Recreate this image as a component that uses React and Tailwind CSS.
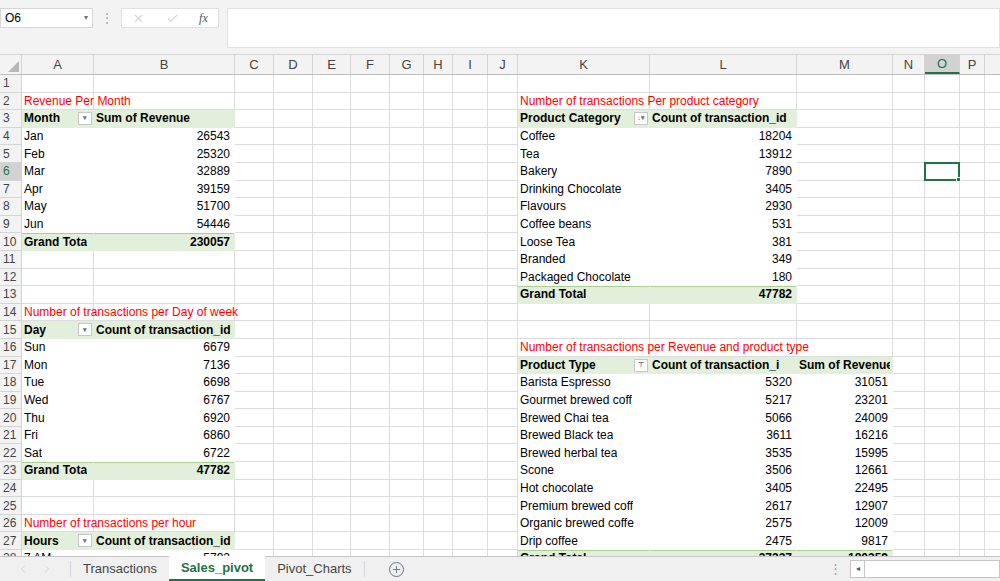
import { Plus, ChevronLeft, ChevronRight, X, Check } from 'lucide-react'

const cols = [
  ['A', 72], ['B', 141], ['C', 39], ['D', 39], ['E', 38], ['F', 39], ['G', 34], ['H', 29], ['I', 35], ['J', 30],
  ['K', 132], ['L', 147], ['M', 96], ['N', 32], ['O', 35], ['P', 25], ['Q', 60],
]

const T = 'title', H = 'head', R = 'num', G = 'total', GR = 'totalnum', D = 'dropdown'

const left = {
  2: { A: ['Revenue Per Month', T] },
  3: { A: ['Month', H, D], B: ['Sum of Revenue', H] },
  4: { A: ['Jan'], B: ['26543', R] },
  5: { A: ['Feb'], B: ['25320', R] },
  6: { A: ['Mar'], B: ['32889', R] },
  7: { A: ['Apr'], B: ['39159', R] },
  8: { A: ['May'], B: ['51700', R] },
  9: { A: ['Jun'], B: ['54446', R] },
  10: { A: ['Grand Tota', G], B: ['230057', GR] },
  14: { A: ['Number of transactions per Day of week', T] },
  15: { A: ['Day', H, D], B: ['Count of transaction_id', H] },
  16: { A: ['Sun'], B: ['6679', R] },
  17: { A: ['Mon'], B: ['7136', R] },
  18: { A: ['Tue'], B: ['6698', R] },
  19: { A: ['Wed'], B: ['6767', R] },
  20: { A: ['Thu'], B: ['6920', R] },
  21: { A: ['Fri'], B: ['6860', R] },
  22: { A: ['Sat'], B: ['6722', R] },
  23: { A: ['Grand Tota', G], B: ['47782', GR] },
  26: { A: ['Number of transactions per hour', T] },
  27: { A: ['Hours', H, D], B: ['Count of transaction_id', H] },
  28: { A: ['7 AM'], B: ['5792', R] },
}
const right = {
  2: { K: ['Number of transactions Per product category', T] },
  3: { K: ['Product Category', H, 'sort'], L: ['Count of transaction_id', H] },
  4: { K: ['Coffee'], L: ['18204', R] },
  5: { K: ['Tea'], L: ['13912', R] },
  6: { K: ['Bakery'], L: ['7890', R] },
  7: { K: ['Drinking Chocolate'], L: ['3405', R] },
  8: { K: ['Flavours'], L: ['2930', R] },
  9: { K: ['Coffee beans'], L: ['531', R] },
  10: { K: ['Loose Tea'], L: ['381', R] },
  11: { K: ['Branded'], L: ['349', R] },
  12: { K: ['Packaged Chocolate'], L: ['180', R] },
  13: { K: ['Grand Total', G], L: ['47782', GR] },
  16: { K: ['Number of transactions per Revenue and product type', T] },
  17: { K: ['Product Type', H, 'filter'], L: ['Count of transaction_i', H], M: ['Sum of Revenue', H] },
  18: { K: ['Barista Espresso'], L: ['5320', R], M: ['31051', R] },
  19: { K: ['Gourmet brewed coff'], L: ['5217', R], M: ['23201', R] },
  20: { K: ['Brewed Chai tea'], L: ['5066', R], M: ['24009', R] },
  21: { K: ['Brewed Black tea'], L: ['3611', R], M: ['16216', R] },
  22: { K: ['Brewed herbal tea'], L: ['3535', R], M: ['15995', R] },
  23: { K: ['Scone'], L: ['3506', R], M: ['12661', R] },
  24: { K: ['Hot chocolate'], L: ['3405', R], M: ['22495', R] },
  25: { K: ['Premium brewed coff'], L: ['2617', R], M: ['12907', R] },
  26: { K: ['Organic brewed coffe'], L: ['2575', R], M: ['12009', R] },
  27: { K: ['Drip coffee'], L: ['2475', R], M: ['9817', R] },
  28: { K: ['Grand Total', G], L: ['37327', GR], M: ['180359', GR] },
}
const cells = {}
for (let r = 1; r <= 29; r++) cells[r] = { ...(left[r] || {}), ...(right[r] || {}) }

const shade = {
  3: ['A', 'B', 'K', 'L'], 10: ['A', 'B'], 13: ['K', 'L'], 15: ['A', 'B'], 23: ['A', 'B'],
  17: ['K', 'L', 'M'], 27: ['A', 'B'], 28: ['K', 'L', 'M'],
}
const topLine = { 10: ['A', 'B'], 13: ['K', 'L'], 23: ['A', 'B'], 28: ['K', 'L', 'M'] }
const white = {}
;[4, 5, 6, 7, 8, 9, 16, 17, 18, 19, 20, 21, 22, 28].forEach((r) => (white[r] = ['A', 'B']))
;[4, 5, 6, 7, 8, 9, 10, 11, 12].forEach((r) => (white[r] = [...(white[r] || []), 'K', 'L']))
;[18, 19, 20, 21, 22, 23, 24, 25, 26, 27].forEach((r) => (white[r] = [...(white[r] || []), 'K', 'L', 'M']))

function Cell({ col, w, row }) {
  const c = cells[row]?.[col]
  const kind = c?.[1]
  const green = shade[row]?.includes(col)
  const noGrid = green || white[row]?.includes(col)
  const sel = row === 6 && col === 'O'
  let cls = 'relative shrink-0 h-full px-[2px] flex items-center whitespace-nowrap '
  cls += green ? 'bg-[#e2efda] ' : 'bg-white '
  cls += noGrid ? 'border-b border-r border-transparent ' : 'border-b border-r border-[#dadcdd] '
  if (kind === H || kind === G || kind === GR) cls += 'font-bold '
  if (kind === R || kind === GR) cls += 'justify-end '
  return (
    <div className={cls} style={{ width: w }}>
      {topLine[row]?.includes(col) && <div className="absolute left-0 right-0 top-0 h-px bg-[#a9d08e]" />}
      {sel && <div className="absolute -left-px -top-px w-[36px] h-[19px] border-2 border-[#217346] z-10"><div className="absolute -right-[3px] -bottom-[3px] w-[5px] h-[5px] bg-[#217346] border border-white" /></div>}
      {c && kind === T && <span className="absolute left-[2px] top-0 h-full flex items-center z-10 text-[#ff0000]">{c[0]}</span>}
      {c && kind !== T && <span className={kind === R || kind === GR ? 'pr-[2px]' : 'overflow-hidden'}>{c[0]}</span>}
      {c?.[2] && (
        <span className="absolute right-[1px] top-[2px] w-[14px] h-[13px] bg-white border border-[#c8c8c8] flex items-center justify-center text-[7px] text-gray-500">
          {c[2] === D ? '▾' : c[2] === 'sort' ? '↓▾' : '⊤'}
        </span>
      )}
    </div>
  )
}

export default function App() {
  const rows = Array.from({ length: 29 }, (_, i) => i + 1)
  return (
    <div className="w-[1000px] h-[581px] overflow-hidden bg-white flex flex-col text-[12px] text-black" style={{ fontFamily: '"Liberation Sans", Arial, sans-serif' }}>
      <div className="h-[55px] shrink-0 bg-[#f3f3f3] flex items-start pt-[8px] gap-2 border-b border-[#d4d4d4]">
        <div className="w-[93px] h-[20px] bg-white border border-[#d6d6d6] flex items-center justify-between px-1 text-[12px]">
          <span>O6</span><span className="text-[8px] text-gray-500">▾</span>
        </div>
        <span className="text-gray-400 mt-[1px]">⋮</span>
        <div className="w-[98px] h-[20px] bg-white border border-[#e0e0e0] flex items-center justify-around text-gray-300">
          <X size={13} /><Check size={13} /><span className="italic text-gray-600 text-[12px]" style={{ fontFamily: '"Liberation Serif", serif' }}>fx</span>
        </div>
        <div className="flex-1 h-[40px] bg-white border border-[#e0e0e0]" />
      </div>
      <div className="flex-1 overflow-hidden">
        <div className="flex h-[20px] bg-[#f3f3f3] text-[#444] text-[13px] border-b border-[#bfbfbf]">
          <div className="w-[22px] shrink-0 border-r border-[#d4d4d4] relative">
            <div className="absolute right-[2px] bottom-[2px] w-0 h-0 border-l-[11px] border-l-transparent border-b-[11px] border-b-[#b7b7b7]" />
          </div>
          {cols.map(([c, w]) => (
            <div key={c} className={`shrink-0 flex items-center justify-center border-r border-[#d4d4d4] ${c === 'O' ? 'bg-[#d2d2d2] text-[#217346] border-b-2 border-b-[#217346]' : ''}`} style={{ width: w }}>{c === 'Q' ? '' : c}</div>
          ))}
        </div>
        {rows.map((r) => (
          <div key={r} className="flex h-[17.6px]">
            <div className={`w-[22px] shrink-0 flex items-center pl-[3px] border-r border-b border-[#d4d4d4] text-[#444] ${r === 6 ? 'bg-[#d2d2d2] text-[#217346]' : 'bg-[#f3f3f3]'}`}>{r}</div>
            {cols.map(([c, w]) => <Cell key={c} col={c} w={w} row={r} />)}
          </div>
        ))}
      </div>
      <div className="h-[25px] shrink-0 bg-[#f0f0f0] border-t border-[#c6c6c6] flex items-stretch text-[13px] text-[#444]">
        <div className="w-[70px] flex items-center justify-center gap-3 text-gray-300"><ChevronLeft size={12} /><ChevronRight size={12} /></div>
        <div className="w-px bg-gray-300 my-[4px]" />
        <div className="px-3 flex items-center">Transactions</div>
        <div className="px-3 flex items-center bg-white font-bold text-[#217346] border-b-2 border-[#217346] -mt-px">Sales_pivot</div>
        <div className="px-3 flex items-center">Pivot_Charts</div>
        <div className="w-px bg-gray-300 my-[4px]" />
        <div className="ml-6 flex items-center text-gray-500"><span className="w-[15px] h-[15px] rounded-full border border-gray-500 flex items-center justify-center"><Plus size={11} /></span></div>
        <div className="flex-1" />
        <span className="flex items-center text-gray-400 mr-2">⋮</span>
        <div className="w-[150px] my-[3px] bg-white border border-[#c6c6c6] flex items-center"><span className="w-[14px] h-full border-r border-[#c6c6c6] flex items-center justify-center text-[8px] text-gray-600">◂</span></div>
      </div>
    </div>
  )
}
